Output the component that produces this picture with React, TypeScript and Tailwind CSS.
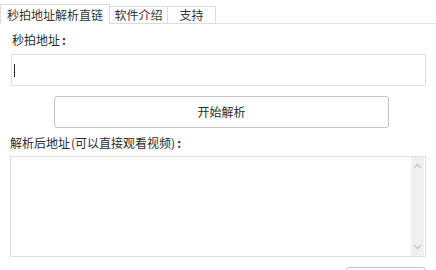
import React from 'react'

const font = { fontFamily: '"Microsoft YaHei", "Noto Sans CJK SC", "Noto Sans", sans-serif' }

function Tab({ label, active, width }: { label: string; active?: boolean; width: string }) {
  return (
    <div
      className={
        active
          ? `${width} h-[20px] -mb-px flex items-center justify-center border border-b-0 border-[#dcdcdc] bg-white text-[#333]`
          : `${width} h-[18px] -mb-px flex items-center justify-center border border-[#dcdcdc] border-l-0 bg-white text-[#333]`
      }
    >
      <span className="leading-none">{label}</span>
    </div>
  )
}

function Chevron({ up }: { up?: boolean }) {
  return (
    <svg width="9" height="6" viewBox="0 0 9 6" className="block">
      <path
        d={up ? 'M1 5 L4.5 1.5 L8 5' : 'M1 1 L4.5 4.5 L8 1'}
        fill="none"
        stroke="#c6c6c6"
        strokeWidth="1.4"
      />
    </svg>
  )
}

export default function App() {
  return (
    <div className="w-[436px] h-[270px] overflow-hidden bg-white text-[12px] text-[#2b2b2b]" style={font}>
      {/* tabs */}
      <div className="flex items-end h-[24px] border-b border-[#e3e3e3] pt-[4px]">
        <Tab label="秒拍地址解析直链" active width="w-[110px]" />
        <Tab label="软件介绍" width="w-[58px]" />
        <Tab label="支持" width="w-[48px]" />
      </div>

      <div className="pl-[11px] pr-[10px]">
        <div className="mt-[6px] h-[20px] flex items-center pl-[1px]">
          秒拍地址<span className="ml-[2px] font-bold">:</span>
        </div>

        <div className="mt-[4px] h-[32px] border border-[#e1e1e1] flex items-center pl-[2px]">
          <div className="w-px h-[13px] bg-[#222]" />
        </div>

        <div className="mt-[10px] ml-[43px] w-[335px] h-[32px] border border-[#c4c4c4] rounded-[3px] flex items-center justify-center">
          开始解析
        </div>

        <div className="mt-[5px] h-[20px] flex items-center -ml-px">
          解析后地址<span className="ml-[1px]">(</span>可以直接观看视频<span>)</span>
          <span className="ml-[2px] font-bold">:</span>
        </div>

        <div className="mt-[3px] -ml-px h-[101px] border border-[#e1e1e1] flex justify-end">
          <div className="w-[13px] mr-[1px] bg-[#f0f0f0] flex flex-col items-center justify-between py-[6px]">
            <Chevron up />
            <Chevron />
          </div>
        </div>

        <div className="mt-[10px] flex justify-end">
          <div className="w-[80px] h-[28px] border border-[#c4c4c4] rounded-[3px]" />
        </div>
      </div>
    </div>
  )
}
